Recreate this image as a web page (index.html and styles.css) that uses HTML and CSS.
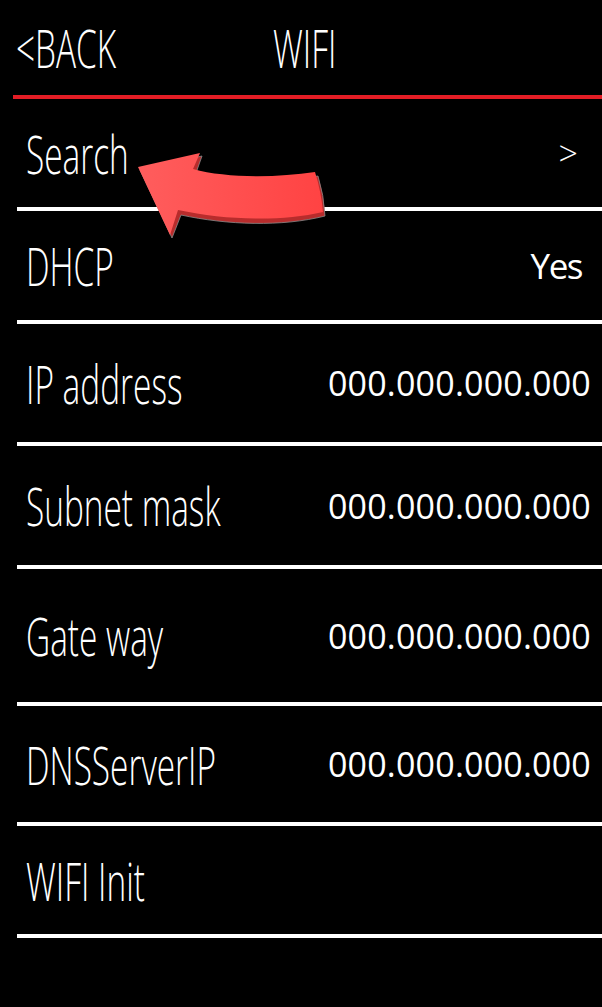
FILE: index.html
```html
<!DOCTYPE html>
<html>

<head>
    <meta name="viewport" content="width=device-width, initial-scale=1" />
    <link rel="stylesheet" href="styles.css">
</head>

<body>
    <!-- 602 x 1007 pixels -->
    <header class="topbar">
        <span class="slot"><span class="squeeze">&lt;BACK</span></span>
        <span class="slot"><span class="squeeze">WIFI</span></span>
    </header>

    <main class="menu">
        <div class="row">
            <span class="lbl"><span class="squeeze">Search</span></span>
            <span class="val val-next">&gt;</span>
        </div>
        <div class="row">
            <span class="lbl"><span class="squeeze">DHCP</span></span>
            <span class="val val-yes">Yes</span>
        </div>
        <div class="row">
            <span class="lbl"><span class="squeeze">IP address</span></span>
            <span class="val">000.000.000.000</span>
        </div>
        <div class="row">
            <span class="lbl"><span class="squeeze">Subnet mask</span></span>
            <span class="val">000.000.000.000</span>
        </div>
        <div class="row">
            <span class="lbl"><span class="squeeze">Gate way</span></span>
            <span class="val">000.000.000.000</span>
        </div>
        <div class="row">
            <span class="lbl"><span class="squeeze">DNSServerIP</span></span>
            <span class="val">000.000.000.000</span>
        </div>
        <div class="row">
            <span class="lbl"><span class="squeeze">WIFI Init</span></span>
        </div>
    </main>

    <!-- red hint arrow pointing at Search -->
    <svg class="pointer" viewBox="0 0 200 95" aria-hidden="true">
        <defs>
            <linearGradient id="arrowFill" x1="0" y1="0" x2="1" y2="0">
                <stop offset="0" stop-color="#ff5d5d" />
                <stop offset="1" stop-color="#ff4343" />
            </linearGradient>
        </defs>
        <path class="arrow-side" d="M10 25 L72 11 L66 28 C98 37 148 37 188 31 Q194 50 195 71 C152 82 97 80 51 70 L42 93 Z" />
        <path fill="url(#arrowFill)" d="M8 22 L70 8 L63 24 C95 33 145 33 185 27 Q191 46 193 67 C150 77 95 75 48 65 L40 90 Z" />
    </svg>
</body>

</html>
```

FILE: styles.css
```css
body {
    margin: 0;
    background-color: #000;
    color: #fff;
    font-family: "Open Sans", "DejaVu Sans", sans-serif;
    width: 602px;
    height: 1007px;
    overflow: hidden;
    position: relative;
}

.topbar {
    height: 95px;
    margin-left: 13px;
    padding-left: 3px;
    display: grid;
    grid-template-columns: 257px 1fr;
    align-items: center;
    border-bottom: 4px solid #e31d25;
}

.slot,
.lbl {
    display: flex;
    align-items: center;
}

/* labels are drawn tall and narrow */
.squeeze {
    display: block;
    font-size: 53px;
    font-weight: 300;
    line-height: 1;
    white-space: nowrap;
    transform: scaleX(0.63);
    transform-origin: left center;
}

.menu {
    margin-left: 17px;
    display: grid;
    grid-template-rows: 112px 113px 122px 123px 137px 120px 112px;
}

.row {
    display: flex;
    align-items: center;
    justify-content: space-between;
    padding-left: 9px;
    border-bottom: 4px solid #fff;
}

.lbl {
    width: 200px;
    flex: 0 0 auto;
}

.val {
    font-size: 34px;
    line-height: 1;
    letter-spacing: 0.2px;
    padding-right: 11px;
    white-space: nowrap;
}

.val-yes {
    font-size: 35px;
    letter-spacing: -1.5px;
    padding-right: 20px;
}

.val-next {
    font-weight: 300;
    padding-right: 24px;
}

.pointer {
    position: absolute;
    left: 130px;
    top: 145px;
    width: 200px;
    height: 95px;
}

.arrow-side {
    fill: #b82c2c;
    stroke: #8a8a8a;
    stroke-width: 0.8;
}
```
